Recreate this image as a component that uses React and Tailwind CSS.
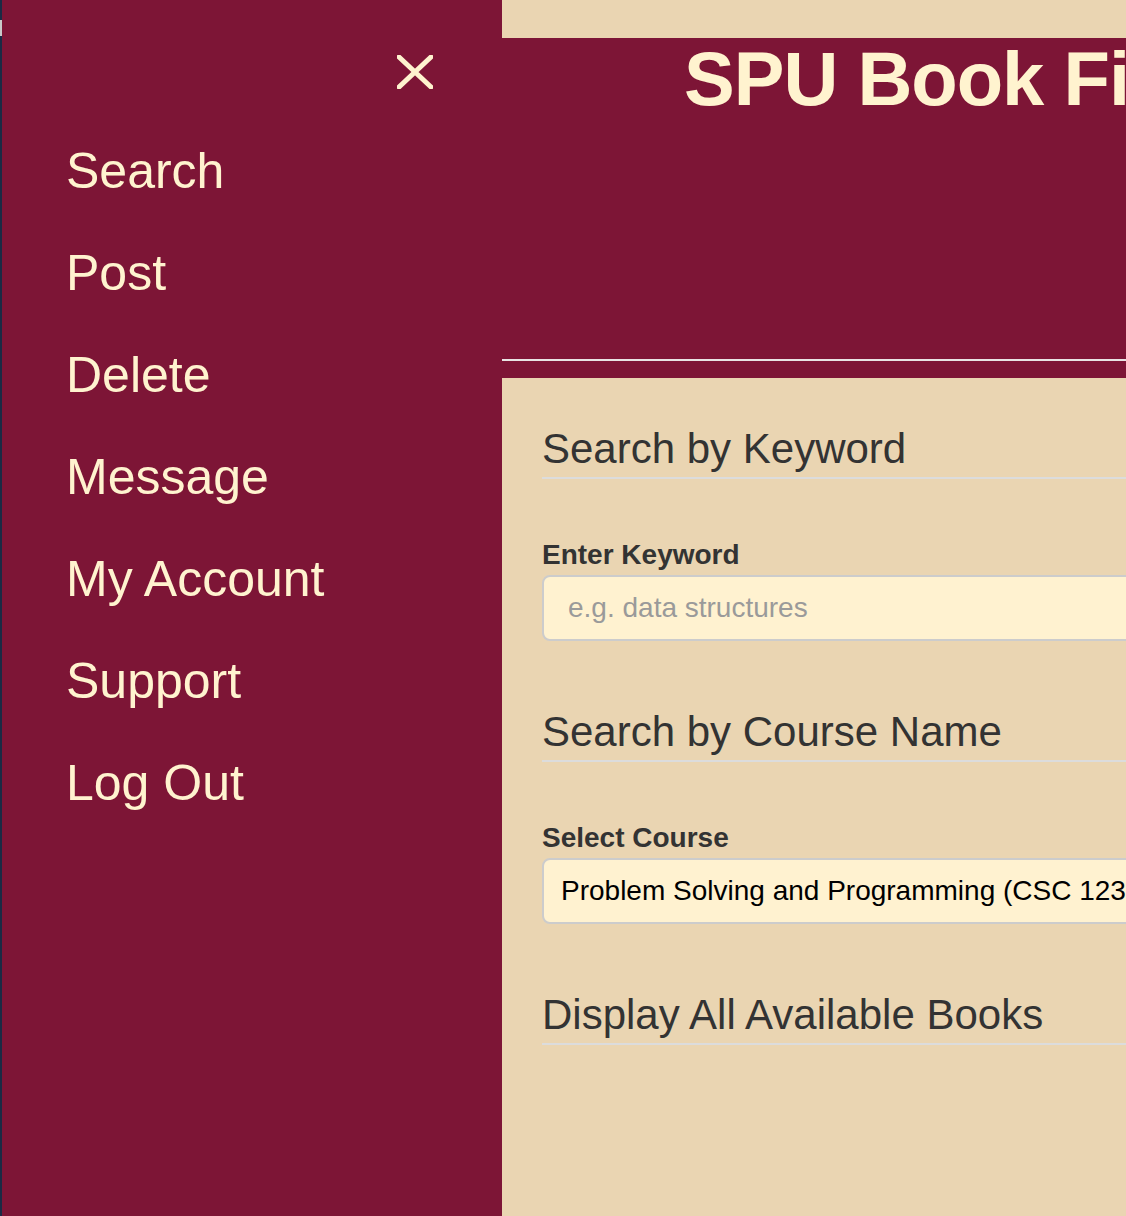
import React from "react";

const items = ["Search", "Post", "Delete", "Message", "My Account", "Support", "Log Out"];

function Section({ title, label, children, first }) {
  return (
    <div className={first ? "pt-[47px]" : "pt-[67px]"}>
      <div className="text-[42px] leading-[48px] text-[#333333] pb-[4px] border-b-2 border-[#dcdcdc] w-[900px] whitespace-nowrap">
        {title}
      </div>
      {label && (
        <div className="mt-[56px] text-[28px] leading-[40px] font-bold text-[#333333]">{label}</div>
      )}
      {children}
    </div>
  );
}

export default function App() {
  return (
    <div
      className="flex w-[1126px] h-[1216px] overflow-hidden"
      style={{ fontFamily: '"Liberation Sans", Arial, sans-serif' }}
    >
      <div className="w-[2px] shrink-0 bg-[#1b2a44] flex flex-col">
        <div className="h-[20px]" />
        <div className="h-[16px] bg-[#c9c9c9]" />
      </div>
      <aside className="w-[500px] shrink-0 bg-[#7d1536] flex flex-col">
        <div className="pt-[55px] pl-[395px]">
          <svg width="36" height="34" viewBox="0 0 36 34">
            <path d="M2 2 L34 32 M34 2 L2 32" stroke="#fff3cf" strokeWidth="5" strokeLinecap="square" />
          </svg>
        </div>
        <nav className="mt-[31px] flex flex-col">
          {items.map((t) => (
            <div key={t} className="pl-[64px] text-[50px] leading-[102px] text-[#fff3cf] whitespace-nowrap">
              {t}
            </div>
          ))}
        </nav>
      </aside>
      <main className="flex-1 min-w-0 overflow-hidden bg-[#ead5b2] flex flex-col">
        <div className="h-[38px] shrink-0" />
        <header className="h-[340px] shrink-0 bg-[#7d1536] flex flex-col">
          <div className="pt-[3px] pl-[182px] text-[76px] leading-none font-bold text-[#fff3cf] whitespace-nowrap tracking-[-1px]">
            SPU Book Finder
          </div>
          <div className="mt-[242px] h-[2px] bg-[#e8e4e4] w-[900px]" />
        </header>
        <div className="pl-[40px] flex flex-col">
          <Section first title="Search by Keyword" label="Enter Keyword">
            <div className="h-[66px] w-[900px] border-2 border-[#cccccc] rounded-[8px] bg-[#fff2d0] px-[24px] flex items-center text-[28px] text-[#9a9a9a]">
              e.g. data structures
            </div>
          </Section>
          <Section title="Search by Course Name" label="Select Course">
            <div className="h-[66px] w-[900px] border-2 border-[#cccccc] rounded-[8px] bg-[#fff2d0] px-[17px] flex items-center text-[28px] text-black whitespace-nowrap">
              Problem Solving and Programming (CSC 1230)
            </div>
          </Section>
          <Section title="Display All Available Books" />
        </div>
      </main>
    </div>
  );
}
